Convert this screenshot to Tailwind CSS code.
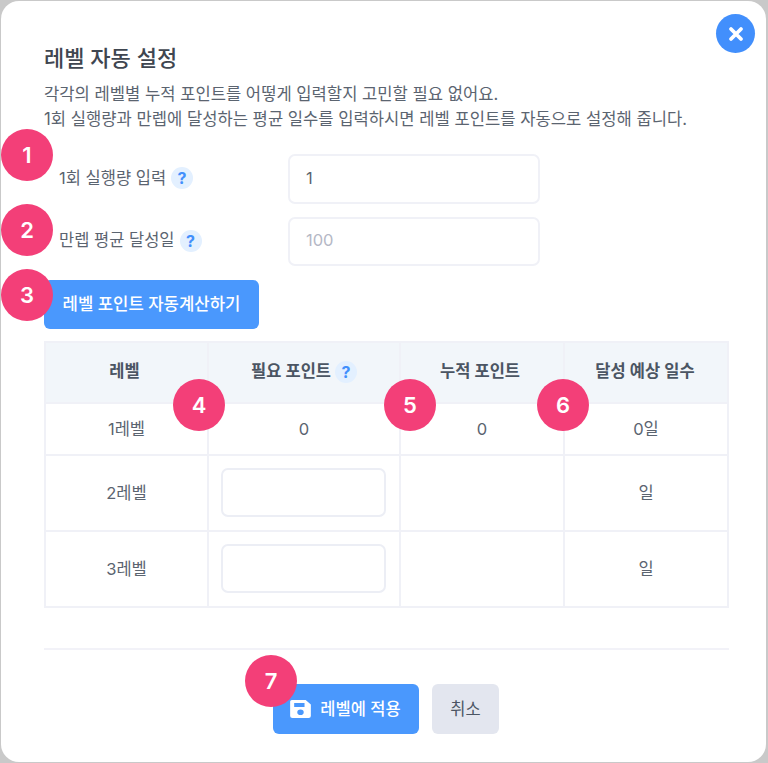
<!DOCTYPE html>
<html lang="ko">
<head>
    <meta charset="UTF-8">
    <meta name="viewport" content="width=device-width, initial-scale=1.0">
    <title>레벨 자동 설정</title>
    <script src="https://cdn.jsdelivr.net/npm/@tailwindcss/browser@4"></script>
</head>
<body class="bg-[#c9c9c9] w-[768px] h-[763px] overflow-hidden font-['Inter','Noto_Sans_CJK_KR',sans-serif]">
    <div class="relative w-[765px] h-[761px] ml-px mt-px bg-white rounded-[18px] pt-[43px] pl-[43px] pr-[36px] text-[#4b5563]">
        <!-- close -->
        <button class="absolute top-[13px] right-[11px] w-[39px] h-[39px] rounded-full bg-[#428ffc] flex items-center justify-center">
            <svg width="16" height="16" viewBox="0 0 16 16"><path d="M3 3l10 10M13 3L3 13" stroke="#fff" stroke-width="3.8" stroke-linecap="round"/></svg>
        </button>

        <h1 class="text-[22px] leading-[28px] font-medium text-[#3f4650]">레벨 자동 설정</h1>
        <p class="mt-[10px] text-[16.6px] leading-[24.500px] text-[#5b6470] whitespace-nowrap">각각의 레벨별 누적 포인트를 어떻게 입력할지 고민할 필요 없어요.<br>1회 실행량과 만렙에 달성하는 평균 일수를 입력하시면 레벨 포인트를 자동으로 설정해 줍니다.</p>

        <div class="mt-[23px] flex items-center h-[50px]">
            <label class="w-[244px] pl-[15px] pb-[2px] flex items-center gap-[5px] text-[16.5px] text-[#5b6470]">1회 실행량 입력
                <span class="w-[22px] h-[22px] rounded-full bg-[#e3f0ff] text-[#428ffc] text-[16px] font-bold flex items-center justify-center">?</span>
            </label>
            <input class="w-[252px] h-[50px] rounded-[7px] border-2 border-[#f0f1f7] px-[16px] pb-[3px] text-[16.5px] text-[#5b6470]" value="1">
        </div>
        <div class="mt-[13px] flex items-center h-[49px]">
            <label class="w-[244px] pl-[15px] pb-[2px] flex items-center gap-[5px] text-[16.5px] text-[#5b6470]">만렙 평균 달성일
                <span class="w-[22px] h-[22px] rounded-full bg-[#e3f0ff] text-[#428ffc] text-[16px] font-bold flex items-center justify-center">?</span>
            </label>
            <input class="w-[252px] h-[49px] rounded-[7px] border-2 border-[#f0f1f7] px-[16px] pb-[3px] text-[16.5px] placeholder:text-[#b5b8c6]" placeholder="100">
        </div>

        <button class="mt-[14px] block w-[215px] h-[49px] rounded-[6px] bg-[#4a98fd] text-white text-[16.7px] font-medium">레벨 포인트 자동계산하기</button>

        <table class="mt-[12px] w-[685px] table-fixed border-collapse text-[16.5px] text-center text-[#5b6470]">
            <thead>
                <tr class="h-[61px] bg-[#f2f6fa] text-[#4b5563]">
                    <th class="w-[163px] border-2 border-[#f0f1f7] font-semibold pr-[4px] pb-[2px]">레벨</th>
                    <th class="w-[192px] border-2 border-[#f0f1f7] font-semibold pb-[2px]">
                        <span class="inline-flex items-center gap-[4px]">필요 포인트
                            <span class="w-[22px] h-[22px] rounded-full bg-[#e3f0ff] text-[#428ffc] text-[16px] font-bold flex items-center justify-center">?</span>
                        </span>
                    </th>
                    <th class="w-[164px] border-2 border-[#f0f1f7] font-semibold pr-[4px] pb-[2px]">누적 포인트</th>
                    <th class="border-2 border-[#f0f1f7] font-semibold pr-[2px] pb-[2px]">달성 예상 일수</th>
                </tr>
            </thead>
            <tbody>
                <tr class="h-[52px]">
                    <td class="border-2 border-[#f0f1f7]">1레벨</td>
                    <td class="border-2 border-[#f0f1f7]">0</td>
                    <td class="border-2 border-[#f0f1f7]">0</td>
                    <td class="border-2 border-[#f0f1f7]">0일</td>
                </tr>
                <tr class="h-[76px]">
                    <td class="border-2 border-[#f0f1f7]">2레벨</td>
                    <td class="border-2 border-[#f0f1f7] pb-[2px] pr-[2px]"><input class="block mx-auto w-[165px] h-[49px] rounded-[7px] border-2 border-[#eceef5]"></td>
                    <td class="border-2 border-[#f0f1f7]"></td>
                    <td class="border-2 border-[#f0f1f7]">일</td>
                </tr>
                <tr class="h-[76px]">
                    <td class="border-2 border-[#f0f1f7]">3레벨</td>
                    <td class="border-2 border-[#f0f1f7] pb-[2px] pr-[2px]"><input class="block mx-auto w-[165px] h-[49px] rounded-[7px] border-2 border-[#eceef5]"></td>
                    <td class="border-2 border-[#f0f1f7]"></td>
                    <td class="border-2 border-[#f0f1f7]">일</td>
                </tr>
            </tbody>
        </table>

        <div class="mt-[40px] w-[685px] border-t-2 border-[#f2f2f8] pt-[34px] pl-[229px] flex gap-[13px]">
            <button class="w-[146px] h-[50px] rounded-[6px] bg-[#4a98fd] text-white text-[16.5px] font-medium flex items-center justify-center gap-[8px] pr-[2px]">
                <svg width="23" height="20" viewBox="0 0 20 20" preserveAspectRatio="none"><path fill="#fff" fill-rule="evenodd" d="M2.500 1h12L19 5.500V17a2 2 0 0 1-2 2H3a2 2 0 0 1-2-2V2.500A1.500 1.500 0 0 1 2.500 1zM4.500 4v4h9V4zM10 10.500a2.800 2.800 0 1 0 0 5.600 2.800 2.800 0 0 0 0-5.600z"/></svg>
                레벨에 적용
            </button>
            <button class="w-[67px] h-[50px] rounded-[6px] bg-[#e3e6ef] text-[#4b5563] text-[16.5px] font-normal">취소</button>
        </div>

        <!-- numbered markers -->
        <span class="absolute left-[0px] top-[128px] w-[52px] h-[52px] rounded-full bg-[#f33f78] text-white text-[22px] font-semibold flex items-center justify-center">1</span>
        <span class="absolute left-[0px] top-[203px] w-[52px] h-[52px] rounded-full bg-[#f33f78] text-white text-[22px] font-semibold flex items-center justify-center">2</span>
        <span class="absolute left-[0px] top-[268px] w-[52px] h-[52px] rounded-full bg-[#f33f78] text-white text-[22px] font-semibold flex items-center justify-center">3</span>
        <span class="absolute left-[172px] top-[378px] w-[52px] h-[52px] rounded-full bg-[#f33f78] text-white text-[22px] font-semibold flex items-center justify-center">4</span>
        <span class="absolute left-[383px] top-[378px] w-[52px] h-[52px] rounded-full bg-[#f33f78] text-white text-[22px] font-semibold flex items-center justify-center">5</span>
        <span class="absolute left-[536px] top-[378px] w-[52px] h-[52px] rounded-full bg-[#f33f78] text-white text-[22px] font-semibold flex items-center justify-center">6</span>
        <span class="absolute left-[244px] top-[654px] w-[52px] h-[52px] rounded-full bg-[#f33f78] text-white text-[22px] font-semibold flex items-center justify-center">7</span>
    </div>
</body>
</html>
